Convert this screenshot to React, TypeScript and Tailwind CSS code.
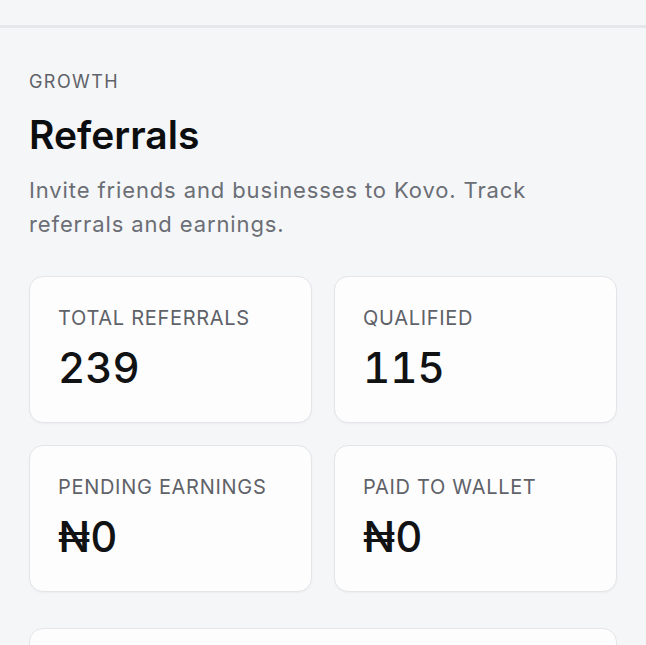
const stats = [
  { label: "TOTAL REFERRALS", value: "239" },
  { label: "QUALIFIED", value: "115" },
  { label: "PENDING EARNINGS", value: "₦0" },
  { label: "PAID TO WALLET", value: "₦0" },
];

function StatCard({ label, value }: { label: string; value: string }) {
  return (
    <div className="rounded-[14px] border-[1.5px] border-[#e4e5e8] bg-[#fdfdfe] px-[28px] pt-[27px] pb-[33px] shadow-[0_1px_2px_rgba(0,0,0,0.04)]">
      <div className="text-[20px] leading-[28px] tracking-[0.035em] text-[#5f6268]">
        {label}
      </div>
      <div className="mt-[15px] text-[42px] font-medium leading-[42px] tabular-nums text-[#111214]">
        {value}
      </div>
    </div>
  );
}

export default function App() {
  return (
    <div
      className="min-h-screen overflow-hidden bg-[#f5f6f8]"
      style={{ fontFamily: "Inter, 'Noto Sans', sans-serif" }}
    >
      <div className="h-[28px] border-b-[3px] border-[#e6e7ea]" />

      <main className="px-[29px] pt-[40px]">
        <div className="text-[18px] leading-[28px] tracking-[0.08em] text-[#5f6268]">
          GROWTH
        </div>
        <h1 className="mt-[16px] text-[39px] font-semibold leading-[46px] text-[#0c0d0f]">
          Referrals
        </h1>
        <p className="mt-[15px] max-w-[540px] text-[22px] leading-[34px] tracking-[0.04em] text-[#6b6e75]">
          Invite friends and businesses to Kovo. Track referrals and earnings.
        </p>

        <div className="mt-[35px] grid grid-cols-2 gap-[22px]">
          {stats.map((s) => (
            <StatCard key={s.label} label={s.label} value={s.value} />
          ))}
        </div>

        <div className="mt-[36px] h-[120px] rounded-[14px] border-[1.5px] border-[#e4e5e8] bg-[#fdfdfe]" />
      </main>
    </div>
  );
}
